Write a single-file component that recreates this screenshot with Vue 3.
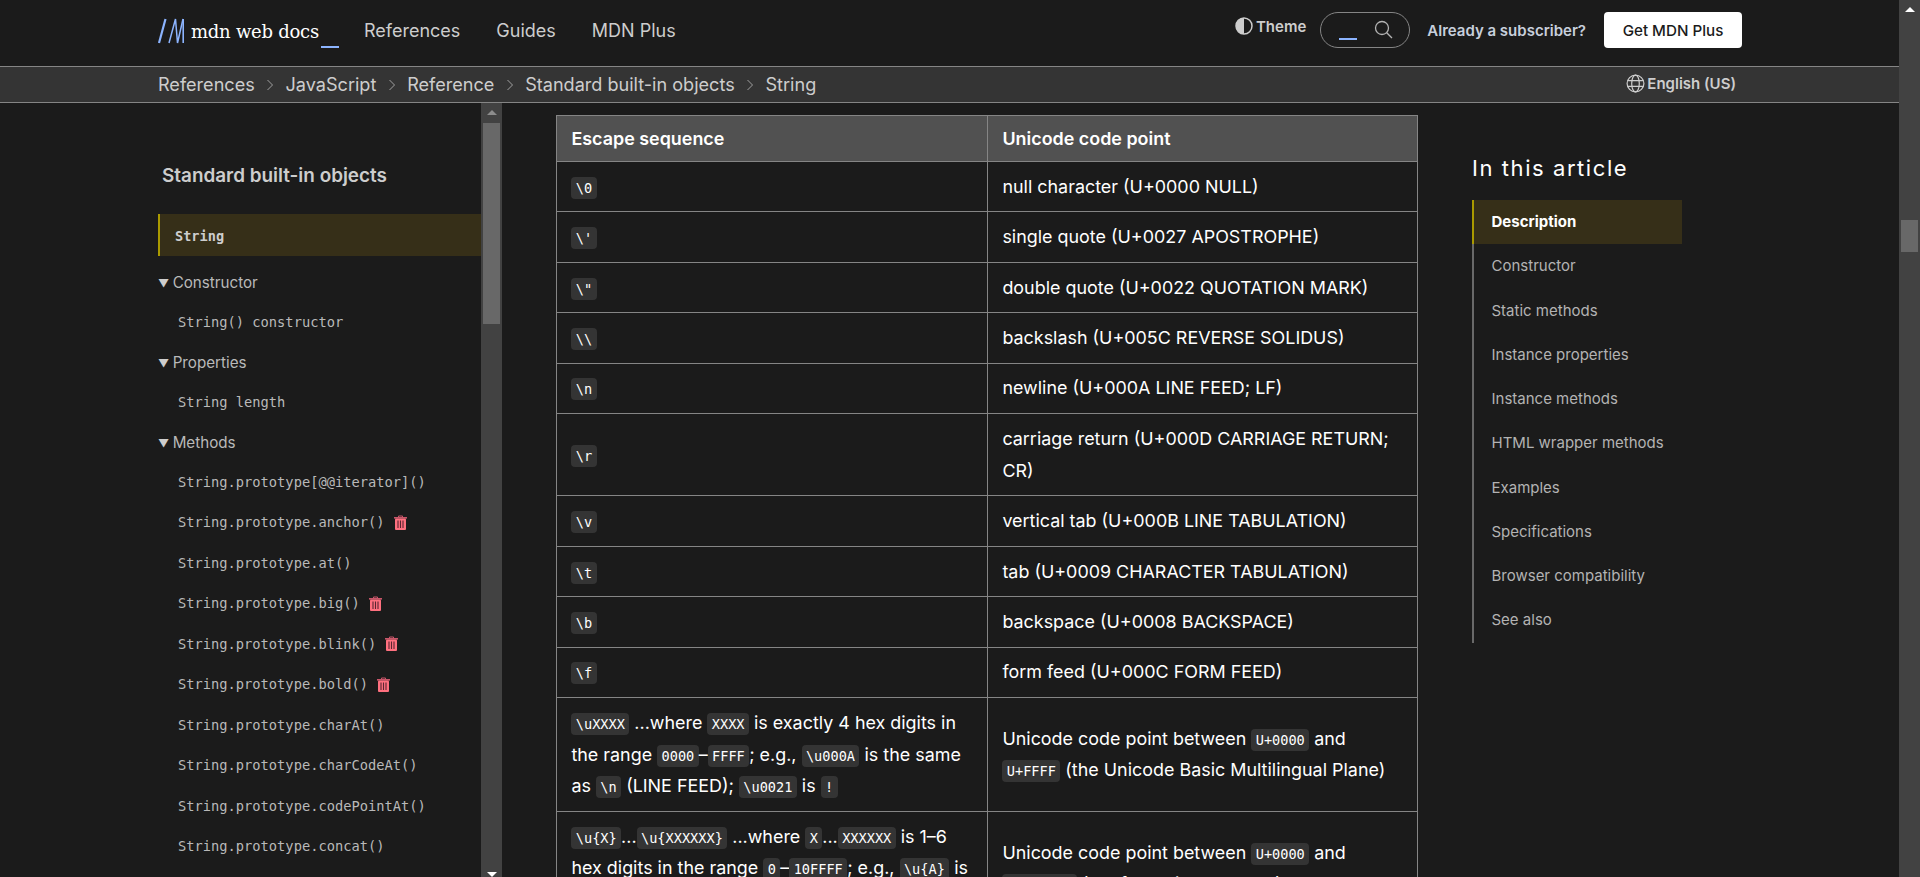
<script setup>
const crumbs = ['References', 'JavaScript', 'Reference', 'Standard built-in objects', 'String']

const props = ['String length']
const methods = [
  { name: 'String.prototype[@@iterator]()' },
  { name: 'String.prototype.anchor()', trash: true },
  { name: 'String.prototype.at()' },
  { name: 'String.prototype.big()', trash: true },
  { name: 'String.prototype.blink()', trash: true },
  { name: 'String.prototype.bold()', trash: true },
  { name: 'String.prototype.charAt()' },
  { name: 'String.prototype.charCodeAt()' },
  { name: 'String.prototype.codePointAt()' },
  { name: 'String.prototype.concat()' },
  { name: 'String.prototype.endsWith()' }
]

const simpleRows = [
  ['\\0', 'null character (U+0000 NULL)'],
  ["\\'", 'single quote (U+0027 APOSTROPHE)'],
  ['\\"', 'double quote (U+0022 QUOTATION MARK)'],
  ['\\\\', 'backslash (U+005C REVERSE SOLIDUS)'],
  ['\\n', 'newline (U+000A LINE FEED; LF)'],
  ['\\r', 'carriage return (U+000D CARRIAGE RETURN; CR)'],
  ['\\v', 'vertical tab (U+000B LINE TABULATION)'],
  ['\\t', 'tab (U+0009 CHARACTER TABULATION)'],
  ['\\b', 'backspace (U+0008 BACKSPACE)'],
  ['\\f', 'form feed (U+000C FORM FEED)']
]

const toc = [
  'Description',
  'Constructor',
  'Static methods',
  'Instance properties',
  'Instance methods',
  'HTML wrapper methods',
  'Examples',
  'Specifications',
  'Browser compatibility',
  'See also'
]
</script>

<template>
  <div class="screen">
    <div class="page">
      <header class="topbar">
        <a class="logo">
          <svg class="logo-mark" width="26" height="26" viewBox="0 0 26 26" fill="none" stroke="#8cb4ff">
            <path d="M1 25 L7.5 1" stroke-width="2.2" />
            <path d="M11 25 L17.5 1 L19.5 25 L25 1" stroke-width="1.5" />
            <path d="M25.2 1 V25" stroke-width="1.6" />
          </svg>
          <span class="logo-text">mdn web docs</span>
          <span class="logo-cursor"></span>
        </a>
        <nav class="mainnav">
          <a>References</a>
          <a>Guides</a>
          <a>MDN Plus</a>
        </nav>
        <div class="top-right">
          <span class="theme">
            <svg width="18" height="18" viewBox="0 0 18 18">
              <circle cx="9" cy="9" r="8" fill="none" stroke="#cdcdcd" stroke-width="1.5" />
              <path d="M9 1 A8 8 0 0 0 9 17 Z" fill="#cdcdcd" />
            </svg>
            Theme
          </span>
          <div class="search">
            <span class="search-cursor"></span>
            <svg width="19" height="19" viewBox="0 0 19 19">
              <circle cx="8" cy="8" r="6.5" fill="none" stroke="#b3b3b3" stroke-width="1.3" />
              <path d="M12.7 12.7 L18 18" stroke="#b3b3b3" stroke-width="1.3" />
            </svg>
          </div>
          <a class="subscriber">Already a subscriber?</a>
          <button class="plus-btn">Get MDN Plus</button>
        </div>
      </header>

      <div class="crumbs">
        <template v-for="(c, i) in crumbs" :key="c">
          <a>{{ c }}</a>
          <svg v-if="i < crumbs.length - 1" class="chev" width="8" height="12" viewBox="0 0 8 12">
            <path d="M1.5 1 L6.5 6 L1.5 11" fill="none" stroke="#a0a0a0" stroke-width="1" />
          </svg>
        </template>
        <span class="lang">
          <svg width="19" height="19" viewBox="0 0 19 19" fill="none" stroke="#cdcdcd" stroke-width="1.2">
            <circle cx="9.5" cy="9.5" r="8.4" />
            <ellipse cx="9.5" cy="9.5" rx="3.8" ry="8.4" />
            <path d="M1.6 6.6 H17.4 M1.6 12.4 H17.4" />
          </svg>
          English (US)
        </span>
      </div>

      <div class="body">
        <aside class="sidebar">
          <div class="side-content">
            <h4 class="side-title">Standard built-in objects</h4>
            <div class="side-current">String</div>
            <div class="side-group">▼<span>Constructor</span></div>
            <div class="side-item">String() constructor</div>
            <div class="side-group">▼<span>Properties</span></div>
            <div v-for="p in props" :key="p" class="side-item">{{ p }}</div>
            <div class="side-group">▼<span>Methods</span></div>
            <div v-for="m in methods" :key="m.name" class="side-item">
              {{ m.name }}
              <svg v-if="m.trash" class="trash" width="13" height="15" viewBox="0 0 13 15">
                <path d="M4.5 2.5 V1 H8.5 V2.5" fill="none" stroke="#c9566a" stroke-width="1" />
                <rect x="0" y="2" width="13" height="1.6" fill="#c9566a" />
                <rect x="1" y="3.6" width="11" height="11.4" rx="1" fill="#ff707f" />
                <path d="M4 5.5 V13 M6.5 5.5 V13 M9 5.5 V13" stroke="#5a2530" stroke-width="1.1" />
              </svg>
            </div>
          </div>
          <div class="scrollbar">
            <span class="arrow-up dim"></span>
            <span class="side-thumb"></span>
            <span class="arrow-down"></span>
          </div>
        </aside>

        <main class="main">
          <table class="esc-table">
            <thead>
              <tr>
                <th class="col-a">Escape sequence</th>
                <th>Unicode code point</th>
              </tr>
            </thead>
            <tbody>
              <tr v-for="r in simpleRows" :key="r[0]">
                <td><code>{{ r[0] }}</code></td>
                <td>{{ r[1] }}</td>
              </tr>
              <tr>
                <td><code>\uXXXX</code> ...where <code>XXXX</code> is exactly 4 hex digits in the range <code>0000</code>–<code>FFFF</code>; e.g., <code>\u000A</code> is the same as <code>\n</code> (LINE FEED); <code>\u0021</code> is <code>!</code></td>
                <td>Unicode code point between <code>U+0000</code> and <code>U+FFFF</code> (the Unicode Basic Multilingual Plane)</td>
              </tr>
              <tr>
                <td><code>\u{X}</code>...<code>\u{XXXXXX}</code> ...where <code>X</code>...<code>XXXXXX</code> is 1–6 hex digits in the range <code>0</code>–<code>10FFFF</code>; e.g., <code>\u{A}</code> is the same as <code>\n</code> (LINE FEED); <code>\u{21}</code> is <code>!</code></td>
                <td>Unicode code point between <code>U+0000</code> and <code>U+10FFFF</code> (the full Unicode range)</td>
              </tr>
            </tbody>
          </table>
        </main>

        <aside class="toc">
          <h2 class="toc-title">In this article</h2>
          <ul class="toc-list">
            <li v-for="(t, i) in toc" :key="t" :class="{ active: i === 0 }">{{ t }}</li>
          </ul>
        </aside>
      </div>
    </div>

    <div class="scrollbar page-bar">
      <span class="arrow-up"></span>
      <span class="page-thumb"></span>
    </div>
  </div>
</template>

<style>
html, body {
  margin: 0;
  background: #1b1b1b;
  overflow: hidden;
}
</style>

<style scoped>
.screen {
  display: flex;
  height: 877px;
  overflow: hidden;
  background: #1b1b1b;
  color: #fff;
  font-family: Inter, "Liberation Sans", sans-serif;
}

.page {
  flex: 1;
  min-width: 0;
  display: flex;
  flex-direction: column;
}

/* top bar */
.topbar {
  height: 66px;
  flex: none;
  display: flex;
  align-items: center;
  padding: 0 157px 0 158px;
}

.logo {
  display: flex;
  align-items: center;
  width: 206px;
  height: 36px;
}

.logo-mark {
  flex: none;
  margin-top: -5px;
}

.logo-text {
  margin-left: 7px;
  font-family: "DejaVu Serif", serif;
  font-size: 18px;
  letter-spacing: -0.25px;
  color: #fff;
  white-space: nowrap;
  margin-top: -4px;
}

.logo-cursor {
  align-self: flex-end;
  flex: none;
  width: 18px;
  height: 2px;
  margin-left: 2px;
  margin-bottom: 3px;
  background: #8cb4ff;
}

.mainnav {
  display: flex;
  gap: 36px;
  font-size: 18px;
  color: #cdcdcd;
  margin-top: -6px;
}

.top-right {
  margin-left: auto;
  margin-top: -6px;
  display: flex;
  align-items: center;
}

.theme {
  display: flex;
  align-items: center;
  gap: 3px;
  font-size: 15px;
  font-weight: 600;
  color: #cdcdcd;
  margin-top: -8px;
  margin-right: 14px;
}

.search {
  width: 90px;
  height: 36px;
  box-sizing: border-box;
  border: 1px solid #858585;
  border-radius: 18px;
  display: flex;
  align-items: center;
  padding-left: 18px;
}

.search svg {
  margin-left: 17px;
  margin-top: -2px;
}

.search-cursor {
  width: 18px;
  height: 2px;
  background: #8cb4ff;
  margin-top: 18px;
}

.subscriber {
  margin-left: 17px;
  font-size: 15px;
  font-weight: 600;
  color: #c7cfdc;
}

.plus-btn {
  margin-left: 18px;
  width: 138px;
  height: 36px;
  border: 0;
  border-radius: 4px;
  background: #fff;
  color: #1b1b1b;
  font-family: inherit;
  font-size: 15.2px;
  font-weight: 500;
}

/* breadcrumb */
.crumbs {
  flex: none;
  height: 35px;
  display: flex;
  align-items: center;
  padding: 0 157px 0 158px;
  background: #343434;
  border-top: 1px solid #858585;
  border-bottom: 1px solid #858585;
  font-size: 18.08px;
  color: #cdcdcd;
}

.crumbs > a {
  margin-top: -1px;
}

.chev {
  margin: 0 11.4px;
  flex: none;
}

.lang {
  margin-left: auto;
  margin-top: -3px;
  display: flex;
  align-items: center;
  gap: 2px;
  font-size: 15px;
  font-weight: 600;
  color: #cdcdcd;
  margin-right: 6px;
}

/* body columns */
.body {
  flex: 1;
  min-height: 0;
  display: flex;
  padding-left: 158px;
  overflow: hidden;
}

/* sidebar */
.sidebar {
  flex: none;
  width: 344px;
  display: flex;
}

.side-content {
  flex: 1;
  min-width: 0;
  overflow: hidden;
  padding-top: 61px;
  color: #b9b9b9;
}

.side-title {
  margin: 0 0 26px 4px;
  font-size: 18.9px;
  line-height: 24px;
  font-weight: 600;
  color: #cdcdcd;
}

.side-current {
  height: 42px;
  box-sizing: border-box;
  border-left: 2px solid #aa9a00;
  background: #362f18;
  padding-left: 15px;
  font-family: "DejaVu Sans Mono", monospace;
  font-size: 13.6px;
  font-weight: 700;
  line-height: 44px;
  color: #cdcdcd;
  margin-bottom: 7px;
}

.side-group {
  height: 39.5px;
  display: flex;
  align-items: center;
  font-size: 11px;
  color: #cdcdcd;
}

.side-group span {
  margin-left: 3.5px;
  font-size: 15.2px;
  color: #b9b9b9;
}

.side-item {
  height: 40.5px;
  box-sizing: border-box;
  display: flex;
  align-items: center;
  gap: 9px;
  padding: 0 0 2px 20px;
  font-family: "DejaVu Sans Mono", monospace;
  font-size: 13.72px;
  white-space: nowrap;
}

.trash {
  flex: none;
}

/* fake scrollbars */
.scrollbar {
  flex: none;
  width: 21px;
  background: #424242;
  display: flex;
  flex-direction: column;
  align-items: center;
  position: relative;
}

.arrow-up {
  margin-top: 7px;
  width: 0;
  height: 0;
  border-left: 5px solid transparent;
  border-right: 5px solid transparent;
  border-bottom: 5px solid #fff;
}

.arrow-up.dim {
  border-bottom-color: #8c8c8c;
}

.arrow-down {
  position: absolute;
  bottom: 0;
  width: 0;
  height: 0;
  border-left: 5px solid transparent;
  border-right: 5px solid transparent;
  border-top: 5px solid #fff;
}

.side-thumb {
  margin-top: 8px;
  width: 17px;
  height: 201px;
  background: #686868;
}

.page-thumb {
  margin-top: 208px;
  width: 17px;
  height: 32px;
  background: #686868;
}

/* main table */
.main {
  flex: none;
  margin-left: 54px;
  padding-top: 12px;
  width: 862px;
}

.esc-table {
  width: 862px;
  table-layout: fixed;
  border-collapse: collapse;
  font-size: 17.92px;
  line-height: 31.68px;
}

.esc-table th,
.esc-table td {
  border: 1px solid #858585;
  padding: 8.9px 14.4px;
  text-align: left;
}

.esc-table th {
  padding-top: 7px;
  padding-bottom: 6px;
  background: #515151;
  font-weight: 600;
}

.col-a {
  width: 431px;
  box-sizing: border-box;
}

code {
  padding: 3px 4.4px;
  border-radius: 4px;
  background: #343434;
  font-family: "DejaVu Sans Mono", monospace;
  font-size: 13.6px;
  line-height: 1;
}

/* toc */
.toc {
  flex: none;
  width: 210px;
  margin-left: 54px;
  padding-top: 50px;
}

.toc-title {
  margin: 0 0 17px;
  font-size: 22px;
  line-height: 30px;
  font-weight: 400;
  letter-spacing: 1.57px;
  color: #fff;
}

.toc-list {
  margin: 0;
  padding: 0;
  list-style: none;
  border-left: 2px solid #696969;
}

.toc-list li {
  height: 44.25px;
  line-height: 44.25px;
  padding-left: 17.5px;
  font-size: 15px;
  color: #b3b3b3;
}

.toc-list li.active {
  margin-left: -2px;
  border-left: 2px solid #aa9a00;
  background: #362f18;
  font-weight: 700;
  color: #fff;
}
</style>
